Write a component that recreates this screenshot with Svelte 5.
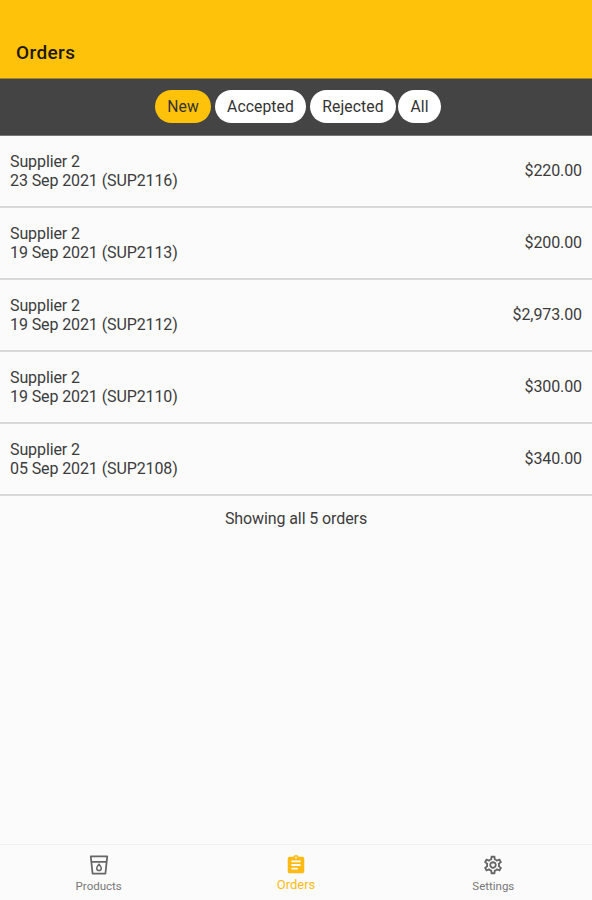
<script>
  const filters = ['New', 'Accepted', 'Rejected', 'All'];

  const orders = [
    { supplier: 'Supplier 2', date: '23 Sep 2021', code: 'SUP2116', total: '$220.00' },
    { supplier: 'Supplier 2', date: '19 Sep 2021', code: 'SUP2113', total: '$200.00' },
    { supplier: 'Supplier 2', date: '19 Sep 2021', code: 'SUP2112', total: '$2,973.00' },
    { supplier: 'Supplier 2', date: '19 Sep 2021', code: 'SUP2110', total: '$300.00' },
    { supplier: 'Supplier 2', date: '05 Sep 2021', code: 'SUP2108', total: '$340.00' }
  ];

  let activeFilter = 'New';
</script>

<div class="app">
  <header class="header">
    <h1 class="title">Orders</h1>
  </header>

  <div class="filters">
    {#each filters as filter}
      <button
        class="chip {filter.toLowerCase()}"
        class:active={activeFilter === filter}
        on:click={() => (activeFilter = filter)}
      >
        {filter}
      </button>
    {/each}
  </div>

  <main class="content">
    {#each orders as order}
      <div class="order">
        <div class="order-info">
          <div>{order.supplier}</div>
          <div>{order.date} ({order.code})</div>
        </div>
        <span class="order-total">{order.total}</span>
      </div>
    {/each}
    <p class="summary">Showing all {orders.length} orders</p>
  </main>

  <nav class="tabs">
    <div class="tab">
      <svg viewBox="0 0 24 24">
        <path fill="none" stroke="currentColor" stroke-width="1.9" stroke-linejoin="round" d="M3 2.500h18l-2 19H5zM3.700 8.500h16.600" />
        <path fill="none" stroke="currentColor" stroke-width="1.700" d="M12 11.300c-1.700 2-2.500 3-2.500 4.200a2.500 2.500 0 0 0 5 0c0-1.200-.8-2.200-2.500-4.200z" />
      </svg>
      <span>Products</span>
    </div>
    <div class="tab selected">
      <svg viewBox="0 0 24 24">
        <path fill="currentColor" d="M19 3h-4.180C14.400 1.840 13.300 1 12 1c-1.300 0-2.400.84-2.820 2H5c-1.100 0-2 .9-2 2v14c0 1.100.9 2 2 2h14c1.100 0 2-.9 2-2V5c0-1.100-.9-2-2-2zm-7 0c.55 0 1 .45 1 1s-.45 1-1 1-1-.45-1-1 .45-1 1-1zm2 14H7v-2h7v2zm3-4H7v-2h10v2zm0-4H7V7h10v2z" />
      </svg>
      <span>Orders</span>
    </div>
    <div class="tab">
      <svg viewBox="0 0 24 24">
        <path fill="currentColor" d="M19.430 12.980c.04-.32.07-.64.07-.98 0-.34-.03-.66-.07-.98l2.110-1.650c.19-.15.24-.42.12-.64l-2-3.460c-.09-.16-.26-.25-.44-.25-.06 0-.12.010-.17.030l-2.490 1c-.52-.4-1.080-.73-1.690-.98l-.38-2.650C14.460 2.180 14.250 2 14 2h-4c-.25 0-.46.18-.49.42l-.38 2.650c-.61.25-1.170.59-1.690.98l-2.490-1c-.06-.02-.12-.03-.18-.03-.17 0-.34.09-.43.25l-2 3.460c-.13.22-.07.49.12.64l2.110 1.650c-.04.32-.07.65-.07.98 0 .33.030.66.070.98l-2.110 1.650c-.19.15-.24.42-.12.64l2 3.460c.09.16.26.25.44.25.06 0 .12-.01.17-.03l2.490-1c.52.4 1.080.73 1.690.98l.38 2.650c.03.24.24.42.49.42h4c.25 0 .46-.18.49-.42l.38-2.650c.61-.25 1.170-.59 1.690-.98l2.490 1c.06.02.12.03.18.03.17 0 .34-.09.43-.25l2-3.460c.12-.22.07-.49-.12-.64l-2.110-1.650zm-1.980-1.710c.04.31.05.52.05.73 0 .21-.02.43-.05.73l-.14 1.130.89.7 1.080.84-.7 1.210-1.270-.51-1.040-.42-.9.68c-.43.32-.84.56-1.250.73l-1.060.43-.16 1.130-.2 1.350h-1.400l-.19-1.350-.16-1.130-1.060-.43c-.43-.18-.83-.41-1.230-.71l-.91-.7-1.060.43-1.270.51-.7-1.210 1.080-.84.89-.7-.14-1.130c-.03-.31-.05-.54-.05-.74s.02-.43.05-.73l.14-1.130-.89-.7-1.080-.84.7-1.210 1.270.51 1.040.42.9-.68c.43-.32.84-.56 1.250-.73l1.060-.43.16-1.130.2-1.350h1.390l.19 1.350.16 1.130 1.060.43c.43.18.83.41 1.230.71l.91.7 1.060-.43 1.270-.51.7 1.210-1.070.85-.89.7.14 1.130zM12 8c-2.210 0-4 1.790-4 4s1.790 4 4 4 4-1.790 4-4-1.790-4-4-4zm0 6c-1.100 0-2-.9-2-2s.9-2 2-2 2 .9 2 2-.9 2-2 2z" />
      </svg>
      <span>Settings</span>
    </div>
  </nav>
</div>

<style>
  :global(body) {
    background: #fbfbfb;
  }

  .app {
    display: flex;
    flex-direction: column;
    height: 100vh;
    font-family: Roboto, sans-serif;
    font-size: 16px;
    color: #3c3c3c;
  }

  .header {
    box-sizing: border-box;
    height: 79px;
    padding: 41px 16px 0;
    background: #ffc20a;
    border-bottom: 1px solid #a6852a;
  }

  .title {
    margin: 0;
    font-size: 19px;
    font-weight: 500;
    line-height: 24px;
    letter-spacing: 0.4px;
    color: #1d1800;
  }

  .filters {
    box-sizing: border-box;
    display: flex;
    justify-content: center;
    gap: 4px;
    height: 57px;
    padding: 11px 0 0 4px;
    background: #444;
    border-bottom: 1px solid #777;
  }

  .chip {
    width: 91px;
    height: 33px;
    padding: 0 0 1px;
    border: none;
    border-radius: 17px;
    background: #fff;
    color: #333;
    font-family: inherit;
    font-size: 15.700px;
    letter-spacing: 0.1px;
    cursor: pointer;
  }

  .chip.new {
    width: 56px;
  }

  .chip.rejected {
    width: 86px;
  }

  .chip.all {
    width: 43px;
    margin-left: -2px;
  }

  .chip.active {
    background: #ffc20a;
  }

  .content {
    flex: 1;
  }

  .order {
    box-sizing: border-box;
    display: flex;
    align-items: center;
    justify-content: space-between;
    height: 72px;
    padding: 0 10px;
    border-bottom: 2px solid #d9d9d9;
    letter-spacing: -0.1px;
  }

  .order-info {
    line-height: 19px;
  }

  .order-total {
    padding-bottom: 2px;
  }

  .summary {
    margin: 13px 0 0;
    line-height: 20px;
    letter-spacing: -0.1px;
    text-align: center;
  }

  .tabs {
    box-sizing: border-box;
    display: flex;
    height: 56px;
    border-top: 1px solid #eee;
  }

  .tab {
    flex: 1;
    display: flex;
    flex-direction: column;
    align-items: center;
    padding-top: 9px;
    font-size: 11.500px;
    line-height: 14px;
    color: #777;
  }

  .tab svg {
    width: 22px;
    height: 22px;
    margin-bottom: 3px;
    color: #666;
  }

  .tab.selected,
  .tab.selected svg {
    color: #fdbb14;
  }

  .tab.selected {
    font-size: 13px;
  }

  .tab.selected svg {
    margin-bottom: 2px;
  }
</style>
